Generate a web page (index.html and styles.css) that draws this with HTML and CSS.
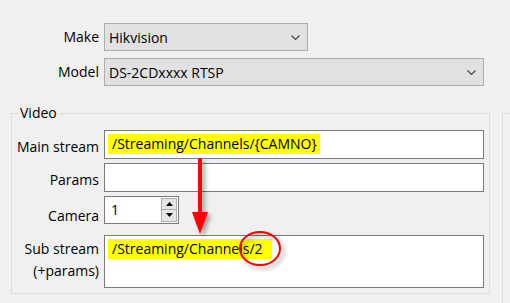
FILE: index.html
```html
<!DOCTYPE html>
<html lang="en">
<head>
  <meta charset="UTF-8">
  <meta name="viewport" content="width=device-width, initial-scale=1.0">
  <title>Camera settings</title>
  <link rel="stylesheet" href="styles.css">
</head>
<body>
  <div class="page">
    <div class="form-top">
      <label class="label">Make</label>
      <div class="combo combo-short">
        <span>Hikvision</span>
        <svg class="chevron" width="9" height="6" viewBox="0 0 9 6"><polyline points="0.5,0.5 4.5,4.5 8.5,0.5" fill="none" stroke="#444" stroke-width="1.2"/></svg>
      </div>
      <label class="label">Model</label>
      <div class="combo combo-long">
        <span>DS-2CDxxxx RTSP</span>
        <svg class="chevron" width="9" height="6" viewBox="0 0 9 6"><polyline points="0.5,0.5 4.5,4.5 8.5,0.5" fill="none" stroke="#444" stroke-width="1.2"/></svg>
      </div>
    </div>

    <div class="groups">
      <fieldset class="group video">
        <legend>Video</legend>
        <div class="rows">
          <label class="label">Main stream</label>
          <div class="textbox"><span class="marker">/Streaming/Channels/{CAMNO}</span></div>

          <label class="label">Params</label>
          <div class="textbox"></div>

          <label class="label">Camera</label>
          <div class="spin">
            <span class="spin-value">1</span>
            <div class="spin-buttons">
              <div class="spin-btn">
                <svg width="7" height="4" viewBox="0 0 7 4"><polygon points="0,4 7,4 3.5,0" fill="#000"/></svg>
              </div>
              <div class="spin-btn">
                <svg width="7" height="4" viewBox="0 0 7 4"><polygon points="0,0 7,0 3.5,4" fill="#000"/></svg>
              </div>
            </div>
          </div>

          <label class="label label-top">Sub stream<br>(+params)</label>
          <div class="textbox textbox-tall"><span class="marker marker-sub">/Streaming/Channels/2</span></div>
        </div>
      </fieldset>
      <fieldset class="group side"></fieldset>
    </div>

    <!-- hand-drawn annotations on top of the form -->
    <svg class="annotations" width="510" height="303" viewBox="0 0 510 303">
      <g class="shadowed">
        <line x1="200" y1="158" x2="200" y2="215" stroke="#ff0000" stroke-width="4"/>
        <polygon points="192,212 208,212 200,234" fill="#ff0000"/>
      </g>
      <ellipse class="shadowed" cx="260" cy="248.5" rx="20" ry="16.5" fill="none" stroke="#ff0000" stroke-width="2"/>
    </svg>
  </div>
</body>
</html>
```

FILE: styles.css
```css
body {
  margin: 0;
  padding: 0;
  background-color: #f0f0f0;
  font-family: "Open Sans", "Noto Sans", sans-serif;
  font-size: 14px;
  color: #000;
  overflow: hidden;
}
.page {
  position: relative;
  width: 510px;
  height: 303px;
  padding: 23px 0 0 11px;
  box-sizing: border-box;
  overflow: hidden;
}
.form-top {
  display: grid;
  grid-template-columns: 88px auto;
  grid-auto-rows: 28px;
  column-gap: 5px;
  row-gap: 7px;
  justify-content: start;
}
.label {
  text-align: right;
  align-self: center;
  line-height: 22px;
  white-space: nowrap;
}
.label-top {
  align-self: start;
  padding-top: 3px;
}
.combo {
  display: flex;
  align-items: center;
  justify-content: space-between;
  box-sizing: border-box;
  height: 28px;
  padding: 0 7px 0 4px;
  background-color: #e1e1e1;
  border: 1px solid #adadad;
}
.combo-short {
  width: 204px;
}
.combo-long {
  width: 380px;
}
.chevron {
  margin-top: 1px;
}
.groups {
  display: flex;
  align-items: flex-start;
  gap: 12px;
  margin-top: 17px;
}
.group {
  margin: 0;
  border: 1px solid #dcdcdc;
  padding: 0;
  box-sizing: border-box;
}
.group legend {
  margin-left: 6px;
  padding: 0 2px;
  line-height: 20px;
}
.video {
  flex-shrink: 0;
  width: 479px;
  padding: 7px 5px 5px 0;
}
.side {
  flex-shrink: 0;
  width: 120px;
  height: 220px;
  margin-top: 10px;
}
.rows {
  display: grid;
  grid-template-columns: 87px 380px;
  column-gap: 5px;
}
.textbox {
  box-sizing: border-box;
  height: 29px;
  padding: 3px 0 0 3px;
  background-color: #fff;
  border: 1px solid #7a7a7a;
  margin-bottom: 4px;
}
.textbox-tall {
  height: 53px;
  padding-top: 3px;
  margin-bottom: 0;
}
.marker {
  display: inline-block;
  height: 20px;
  line-height: 20px;
  padding: 0 3px 0 4px;
  background-color: #ffff00;
}
.marker-sub {
  padding-right: 9px;
}
.spin {
  display: flex;
  justify-content: space-between;
  box-sizing: border-box;
  width: 75px;
  height: 28px;
  margin-bottom: 11px;
  padding: 1px 1px 1px 6px;
  background-color: #fff;
  border: 1px solid #7a7a7a;
}
.spin-value {
  line-height: 24px;
}
.spin-buttons {
  display: flex;
  flex-direction: column;
  width: 16px;
}
.spin-btn {
  display: flex;
  align-items: center;
  justify-content: center;
  height: 12px;
  box-sizing: border-box;
  background-color: #e5e5e5;
  border: 1px solid #adadad;
}
.spin-btn + .spin-btn {
  border-top: none;
  height: 13px;
}
.annotations {
  position: absolute;
  top: 0;
  left: 0;
  pointer-events: none;
}
.shadowed {
  filter: drop-shadow(3px 3px 2px rgba(0, 0, 0, 0.35));
}
```
